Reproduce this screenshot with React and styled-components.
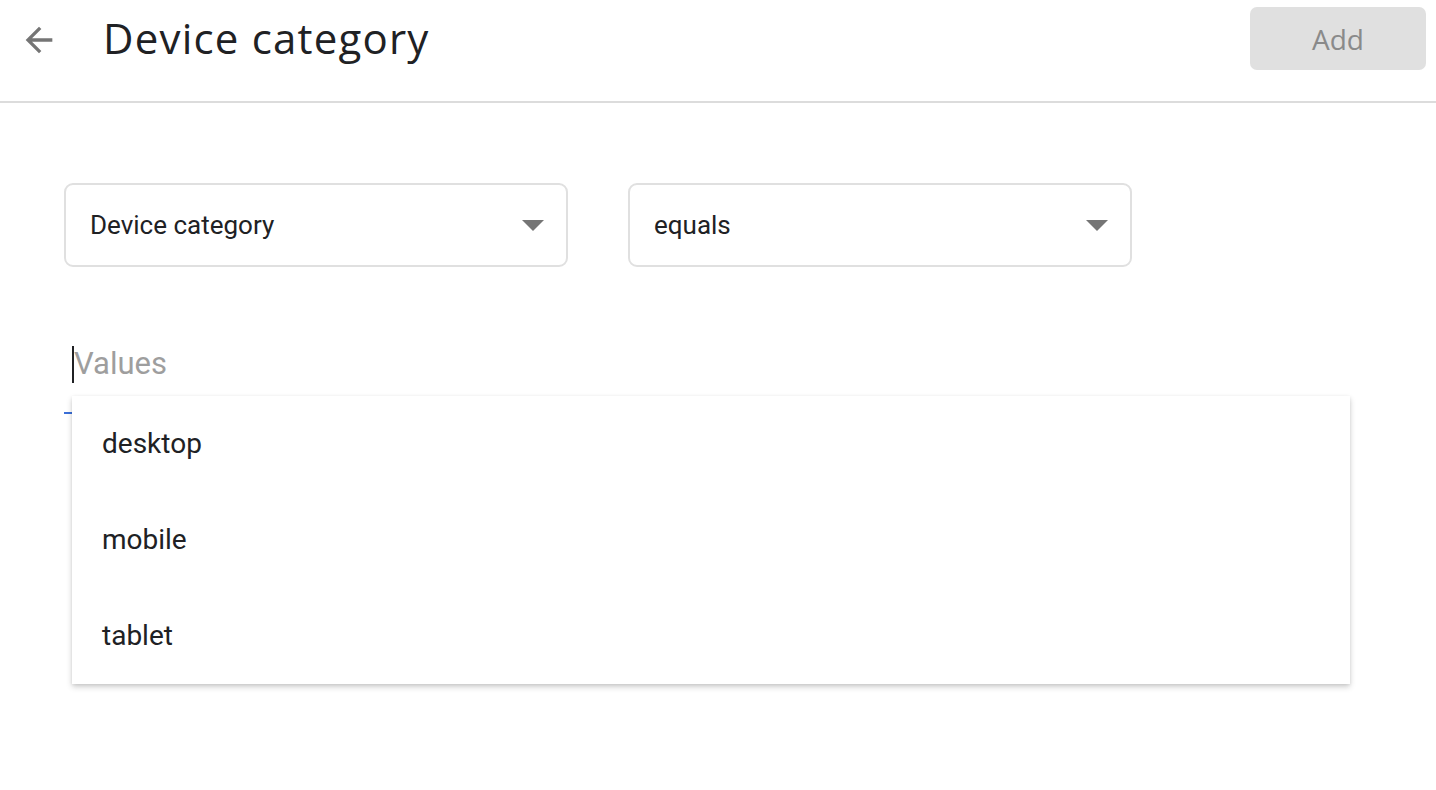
import React from "react";
import styled, { createGlobalStyle } from "styled-components";

const GlobalStyle = createGlobalStyle`
  body {
    margin: 0;
    background: #ffffff;
    font-family: Roboto, "Liberation Sans", sans-serif;
  }
`;

const Page = styled.div`
  width: 1436px;
  height: 790px;
  overflow: hidden;
  background: #fff;
`;

const Header = styled.header`
  height: 101px;
  border-bottom: 2px solid #dcdcdc;
  display: flex;
  align-items: flex-start;
  padding: 0 10px 0 18px;
`;

const BackButton = styled.button`
  width: 42px;
  height: 42px;
  margin-top: 19px;
  padding: 0;
  border: none;
  background: none;
  display: flex;
  align-items: center;
  justify-content: center;
  cursor: pointer;
`;

const Title = styled.h1`
  margin: 9px 0 0 43px;
  font-family: "Open Sans", Roboto, sans-serif;
  font-weight: 400;
  font-size: 42px;
  letter-spacing: 1.2px;
  color: #202124;
  flex: 1;
`;

const AddButton = styled.button`
  margin-top: 7px;
  width: 176px;
  height: 63px;
  border: none;
  border-radius: 7px;
  background: #e0e0e0;
  color: #8a8a8a;
  font-family: "Open Sans", Roboto, sans-serif;
  font-size: 28px;
  font-weight: 500;
`;

const Body = styled.main`
  padding: 80px 0 0 64px;
`;

const SelectRow = styled.div`
  display: flex;
  gap: 60px;
`;

const Select = styled.div`
  width: 504px;
  height: 84px;
  box-sizing: border-box;
  border: 2px solid #e0e0e0;
  border-radius: 9px;
  display: flex;
  align-items: center;
  justify-content: space-between;
  padding: 0 22px 0 24px;
  font-size: 26px;
  color: #202124;
`;

const Caret = styled.span`
  width: 0;
  height: 0;
  border-left: 11px solid transparent;
  border-right: 11px solid transparent;
  border-top: 11px solid #757575;
`;

const ValuesField = styled.div`
  position: relative;
  width: 1286px;
  margin-top: 78px;
`;

const ValuesInput = styled.div`
  display: flex;
  align-items: flex-start;
  height: 67px;
  padding-left: 8px;
  border-bottom: 2px solid #3b6fd8;
`;

const Cursor = styled.span`
  width: 2px;
  height: 37px;
  background: #202124;
  margin-top: 1px;
`;

const Placeholder = styled.span`
  font-size: 31px;
  line-height: 38px;
  color: #9e9e9e;
`;

const Menu = styled.ul`
  position: absolute;
  top: 51px;
  left: 8px;
  width: 1278px;
  margin: 0;
  padding: 0;
  list-style: none;
  background: #fff;
  box-shadow: 0 3px 6px rgba(0, 0, 0, 0.18), 0 1px 3px rgba(0, 0, 0, 0.08);
`;

const MenuItem = styled.li`
  height: 96px;
  box-sizing: border-box;
  padding: 0 0 2px 30px;
  display: flex;
  align-items: center;
  font-size: 28px;
  color: #202124;
`;

export default function App() {
  return (
    <Page>
      <GlobalStyle />
      <Header>
        <BackButton aria-label="Back">
          <svg width="40" height="40" viewBox="0 0 24 24">
            <path d="M20 11H7.83l5.59-5.59L12 4l-8 8 8 8 1.41-1.41L7.83 13H20v-2z" fill="#757575" />
          </svg>
        </BackButton>
        <Title>Device category</Title>
        <AddButton disabled>Add</AddButton>
      </Header>
      <Body>
        <SelectRow>
          <Select>
            Device category
            <Caret />
          </Select>
          <Select>
            equals
            <Caret />
          </Select>
        </SelectRow>
        <ValuesField>
          <ValuesInput>
            <Cursor />
            <Placeholder>Values</Placeholder>
          </ValuesInput>
          <Menu>
            {["desktop", "mobile", "tablet"].map((v) => (
              <MenuItem key={v}>{v}</MenuItem>
            ))}
          </Menu>
        </ValuesField>
      </Body>
    </Page>
  );
}
